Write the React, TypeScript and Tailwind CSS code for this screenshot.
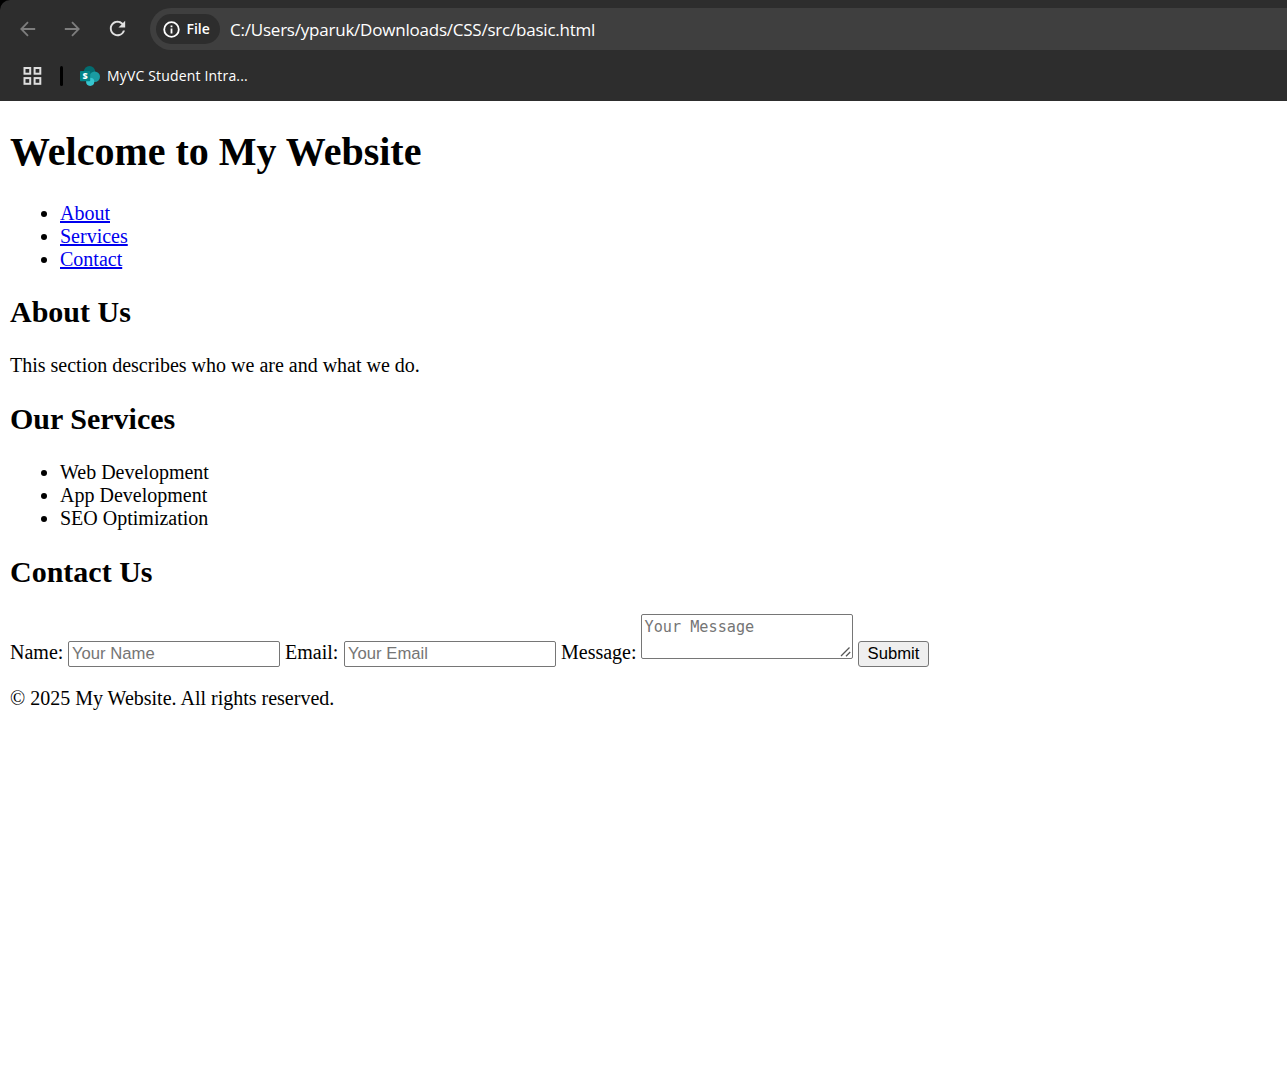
import React from "react";
import { MdRefresh } from "react-icons/md";

function BackArrow({ className = "" }: { className?: string }) {
  return (
    <svg width="16" height="16" viewBox="0 0 16 16" fill="none" stroke="#7d7d7d" strokeWidth="1.8" className={className}>
      <path d="M15.2 8H1.6M8 1.1L1.3 8L8 14.9" />
    </svg>
  );
}

function InfoIcon() {
  return (
    <svg width="17" height="17" viewBox="0 0 17 17" fill="none" stroke="#fff" strokeWidth="1.8">
      <circle cx="8.5" cy="8.5" r="7.3" />
      <path d="M8.5 7.6V12.4M8.5 4.6V6.3" />
    </svg>
  );
}

function AppsIcon() {
  return (
    <svg width="19" height="18" viewBox="0 0 19 18" fill="none" stroke="#dedede" strokeWidth="2">
      <rect x="1.5" y="1" width="5.7" height="5.7" />
      <rect x="11.6" y="1" width="5.7" height="5.7" />
      <rect x="1.5" y="11.1" width="5.7" height="5.7" />
      <rect x="11.6" y="11.1" width="5.7" height="5.7" />
    </svg>
  );
}

function SharePointIcon() {
  return (
    <svg width="20" height="20" viewBox="0 0 20 20">
      <circle cx="9.5" cy="5.8" r="5.8" fill="#036c70" />
      <circle cx="14.7" cy="10.7" r="5.3" fill="#1a9ba1" />
      <circle cx="10.2" cy="15.8" r="4.1" fill="#37c6d0" />
      <rect x="0" y="5" width="10.2" height="10.2" rx=".8" fill="#038387" />
      <text x="5.1" y="13.3" textAnchor="middle" fontFamily="Open Sans, sans-serif" fontWeight="800" fontSize="9" fill="#fff">S</text>
    </svg>
  );
}

function BrowserBar() {
  return (
    <div className="bg-black">
      <header className="h-[101px] rounded-tl-[10px] bg-[#2d2d2d] pt-2 font-['Open_Sans',sans-serif] text-white">
        <div className="flex h-[42px] items-center">
          <BackArrow className="mb-px ml-5" />
          <BackArrow className="mb-px ml-[28px] rotate-180" />
          <MdRefresh size={23} color="#e0e0e0" className="mb-[2px] ml-[26px]" />
          <div className="ml-[21px] flex h-[42px] flex-1 items-center rounded-l-full bg-[#3f3f3f] pl-[6px]">
            <div className="flex h-[30px] w-16 items-center gap-[7px] rounded-full bg-[#2d2d2d] pl-[6.5px]">
              <InfoIcon />
              <span className="text-[14px] font-semibold leading-[18px]">File</span>
            </div>
            <span className="ml-[10px] mt-px whitespace-nowrap text-[17px] leading-6 tracking-[-0.22px]">C:/Users/yparuk/Downloads/CSS/src/basic.html</span>
          </div>
        </div>
        <div className="flex h-[51px] items-center pl-[23px]">
          <AppsIcon />
          <span className="ml-[18px] h-5 w-[3px] rounded-full bg-black" />
          <span className="ml-[17px]"><SharePointIcon /></span>
          <span className="ml-[7px] whitespace-nowrap text-[14px] leading-5 tracking-[0.17px]">MyVC Student Intra...</span>
        </div>
      </header>
    </div>
  );
}

const linkItems = ["About", "Services", "Contact"];
const services = ["Web Development", "App Development", "SEO Optimization"];

const listClass = "list-disc pl-[50px] leading-[23px]";
const h2Class = "text-[30px] font-bold leading-[34px]";
const inputClass =
  "h-[26px] w-[212px] rounded-[2px] border border-[#767676] bg-white px-[3px] font-['Liberation_Sans',sans-serif] text-[16.667px] placeholder:text-[#757575]";

export default function App() {
  return (
    <div className="min-h-[1067px] bg-white text-black">
      <BrowserBar />
      <main className="px-[10px] font-['Liberation_Serif',serif] text-[20px] leading-[23px]">
        <h1 className="pt-[28px] text-[40px] font-bold leading-[46px]">Welcome to My Website</h1>
        <ul className={`mt-[27px] ${listClass}`}>
          {linkItems.map((t) => (
            <li key={t}>
              <a href={"#" + t.toLowerCase()} className="text-[#0000ee] underline">{t}</a>
            </li>
          ))}
        </ul>
        <h2 className={`mt-[24px] ${h2Class}`}>About Us</h2>
        <p className="mt-[25px]">This section describes who we are and what we do.</p>
        <h2 className={`mt-[25px] ${h2Class}`}>Our Services</h2>
        <ul className={`mt-[25px] ${listClass}`}>
          {services.map((t) => (
            <li key={t}>{t}</li>
          ))}
        </ul>
        <h2 className={`mt-[25px] ${h2Class}`}>Contact Us</h2>
        <form className="mt-[25px] flex h-[53px] items-end whitespace-nowrap" onSubmit={(e) => e.preventDefault()}>
          <label className="mb-[3px] w-[58px]">Name:</label>
          <input className={inputClass} placeholder="Your Name" />
          <label className="mb-[3px] ml-[5px] w-[59px]">Email:</label>
          <input className={inputClass} placeholder="Your Email" />
          <label className="mb-[3px] ml-[5px] w-[80px]">Message:</label>
          <div className="relative mb-[8px] h-[45px] w-[212px]">
            <textarea
              className="block h-full w-full resize-none rounded-[2px] border border-[#767676] bg-white px-[2.5px] py-[3px] font-['DejaVu_Sans_Mono',monospace] text-[15.2px] leading-[19px] placeholder:text-[#757575]"
              placeholder="Your Message"
            />
            <svg className="pointer-events-none absolute bottom-[2px] right-[2px]" width="11" height="11" viewBox="0 0 11 11" fill="none" stroke="#555" strokeWidth="1.3">
              <path d="M1 10L9.5 1.5M6 10.2L10.2 6" />
            </svg>
          </div>
          <button className="ml-[5px] h-[26px] w-[71px] rounded-[3px] border border-[#767676] bg-[#efefef] font-['Liberation_Sans',sans-serif] text-[16.667px] leading-[22px]">
            Submit
          </button>
        </form>
        <p className="mt-[20px]">© 2025 My Website. All rights reserved.</p>
      </main>
    </div>
  );
}
